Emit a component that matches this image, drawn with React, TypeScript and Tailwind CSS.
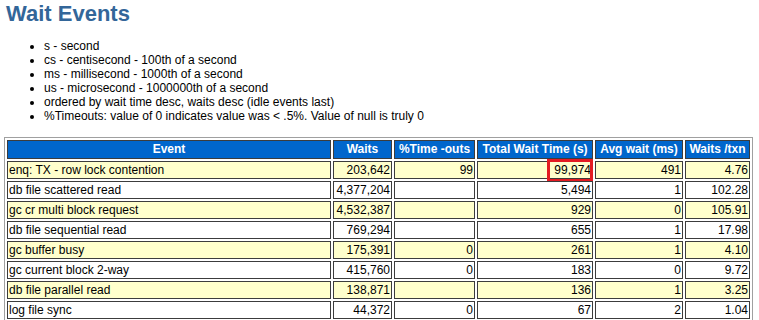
const NOTES = [
  's - second',
  'cs - centisecond - 100th of a second',
  'ms - millisecond - 1000th of a second',
  'us - microsecond - 1000000th of a second',
  'ordered by wait time desc, waits desc (idle events last)',
  '%Timeouts: value of 0 indicates value was < .5%. Value of null is truly 0',
]

const COLUMNS = [
  { label: 'Event', width: 'w-[324px]' },
  { label: 'Waits', width: 'w-[59px]' },
  { label: '%Time -outs', width: 'w-[81px]' },
  { label: 'Total Wait Time (s)', width: 'w-[116px]' },
  { label: 'Avg wait (ms)', width: 'w-[88px]' },
  { label: 'Waits /txn', width: 'w-[65px]' },
]

const ROWS = [
  ['enq: TX - row lock contention', '203,642', '99', '99,974', '491', '4.76'],
  ['db file scattered read', '4,377,204', '', '5,494', '1', '102.28'],
  ['gc cr multi block request', '4,532,387', '', '929', '0', '105.91'],
  ['db file sequential read', '769,294', '', '655', '1', '17.98'],
  ['gc buffer busy', '175,391', '0', '261', '1', '4.10'],
  ['gc current block 2-way', '415,760', '0', '183', '0', '9.72'],
  ['db file parallel read', '138,871', '', '136', '1', '3.25'],
  ['log file sync', '44,372', '0', '67', '2', '1.04'],
]

export default function App() {
  return (
    <div className="min-h-screen bg-white px-[4px] font-['Liberation_Sans',Arial,sans-serif] text-black">
      <h2 className="pl-[2px] pt-[1px] text-[22px] font-bold leading-[25px] text-[#336699]">Wait Events</h2>

      <ul className="mb-[14px] mt-[13px] list-disc pl-[40px] text-[12px] leading-[14px]">
        {NOTES.map((note) => (
          <li key={note}>{note}</li>
        ))}
      </ul>

      <table className="w-[749px] table-fixed border-separate border-spacing-[2px] border border-[#a0a0a0] text-[12px]">
        <thead>
          <tr>
            {COLUMNS.map((col) => (
              <th
                key={col.label}
                className={`${col.width} border border-[#3c3c3c] bg-[#0066cc] px-[1px] text-center font-bold leading-[17px] text-white whitespace-nowrap`}
              >
                {col.label}
              </th>
            ))}
          </tr>
        </thead>
        <tbody>
          {ROWS.map((row, i) => {
            const bg = i % 2 === 0 ? 'bg-[#ffffcc]' : 'bg-white'
            return (
              <tr key={row[0]}>
                {row.map((cell, j) => (
                  <td
                    key={j}
                    className={`${bg} relative border border-[#3c3c3c] px-[1px] leading-[16px] whitespace-nowrap ${j === 0 ? 'text-left' : 'text-right'}`}
                  >
                    {cell}
                    {/* highlight box drawn over the top wait */}
                    {i === 0 && j === 3 && (
                      <span className="absolute right-[-1px] top-[-3px] h-[23px] w-[46px] border-[3px] border-[#e31b23]" />
                    )}
                  </td>
                ))}
              </tr>
            )
          })}
        </tbody>
      </table>
    </div>
  )
}
